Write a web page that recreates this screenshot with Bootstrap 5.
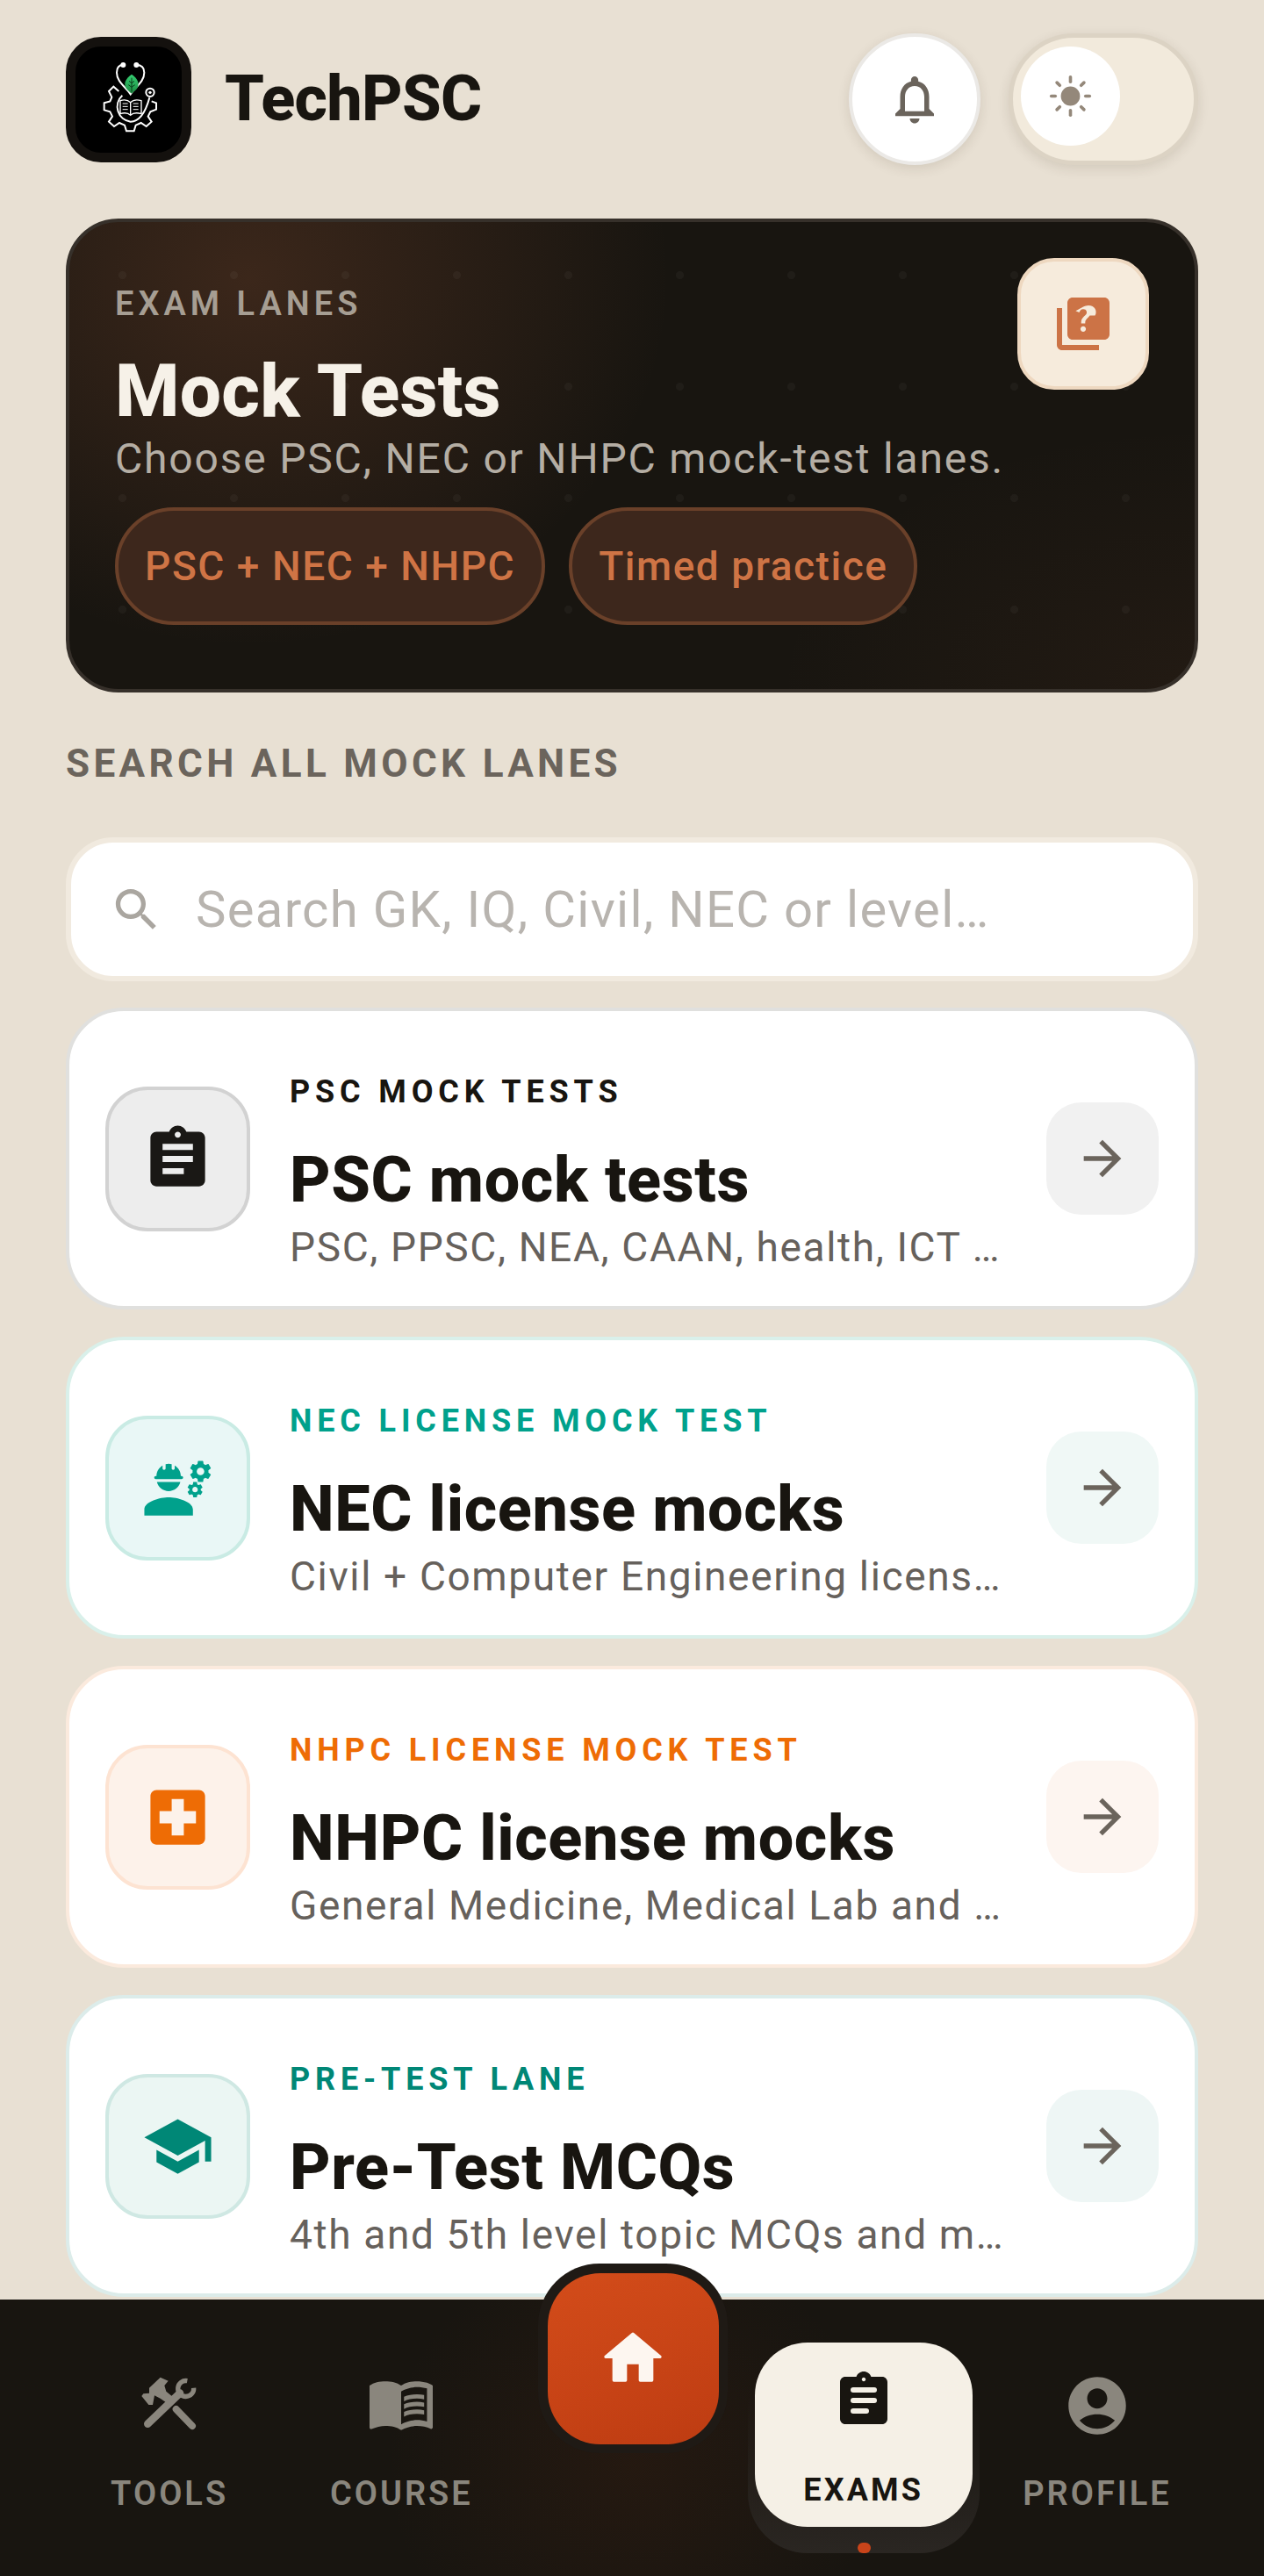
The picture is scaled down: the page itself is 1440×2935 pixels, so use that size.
<!DOCTYPE html>
<html lang="en">
<head>
  <meta charset="UTF-8" />
  <meta name="viewport" content="width=device-width, initial-scale=1" />
  <title>TechPSC - Mock Tests</title>
  <link href="https://cdn.jsdelivr.net/npm/bootstrap@5.3.0/dist/css/bootstrap.min.css" rel="stylesheet" />
  <style>
    body {
      background: #e8e0d3;
      font-family: Roboto, "Liberation Sans", sans-serif;
      color: #181510;
    }
    .page-wrap { height: 2935px; overflow: hidden; }
    .page-main { height: 2620px; padding: 38px 75px 0; }

    .top-bar { height: 150px; margin-bottom: 61px; }
    .logo-box {
      width: 143px; height: 143px; border-radius: 40px;
      background: #000; border: 11px solid #14110e;
    }
    .brand-name { font-size: 72px; font-weight: 800; letter-spacing: -.7px; margin-left: 38px; line-height: 1; }
    .bell-btn {
      width: 150px; height: 150px; border-radius: 50%;
      background: #fff; border: 4px solid #ebe9e6;
      box-shadow: 0 4px 14px rgba(60, 45, 25, .12);
    }
    .theme-toggle {
      width: 216px; height: 150px; border-radius: 75px; margin-left: 32px; padding: 10px 9px;
      background: #f2eadc; border: 5px solid #dcd3c4;
      box-shadow: 0 4px 14px rgba(60, 45, 25, .12);
    }
    .theme-knob { width: 113px; height: 113px; border-radius: 50%; background: #fff; }

    .hero-card {
      height: 540px; border-radius: 60px; padding: 72px 52px 0;
      border: 4px solid #36302a;
      background-color: #181510;
      background-image:
        radial-gradient(circle, rgba(255, 255, 255, .035) 4px, transparent 5px),
        radial-gradient(480px 420px at 16% 12%, rgba(201, 111, 69, .2), transparent 100%),
        radial-gradient(480px 300px at 100% 100%, rgba(201, 111, 69, .06), transparent 100%);
      background-size: 127px 127px, auto, auto;
      background-position: -3px -3px, 0 0, 0 0;
    }
    .hero-eyebrow { font-size: 38px; font-weight: 600; letter-spacing: 5px; color: #a69e93; line-height: 42px; }
    .hero-title { font-size: 84px; font-weight: 800; color: #f6f1e8; line-height: 94px; margin: 32px 0 0; letter-spacing: .2px; }
    .hero-sub { font-size: 48px; color: #b5aea4; line-height: 54px; letter-spacing: 1.8px; margin: 3px 0 0; white-space: nowrap; }
    .hero-chips { margin-top: 28px; gap: 27px; }
    .hero-chip {
      height: 134px; border-radius: 67px; padding: 0 30px;
      font-size: 46px; font-weight: 500; letter-spacing: 1.55px; color: #cf7445;
      background: #3d271c; border: 4px solid #6a4029;
    }
    .hero-quiz {
      width: 150px; height: 150px; border-radius: 42px; top: 41px; right: 52px;
      background: #f6ebdc; border: 4px solid #eed8c0;
    }

    .section-label { font-size: 44px; font-weight: 700; letter-spacing: 4.35px; color: #6b645c; line-height: 48px; margin: 57px 0 60px; }

    .search-field {
      height: 164px; border-radius: 54px; padding: 0 43px;
      background: #fff; border: 6px solid #f1eadf;
    }
    .search-text { font-size: 58px; color: #b8b4af; letter-spacing: 1.3px; margin-left: 36px; white-space: nowrap; }

    .lane-list { margin-top: 30px; gap: 31px; }
    .lane-card {
      height: 344px; border-radius: 66px; padding: 0 41px;
      background: #fff; border: 4px solid #e0e0de; gap: 45px;
    }
    .lane-icon { width: 165px; height: 165px; border-radius: 48px; border: 4px solid; flex: none; }
    .lane-body { flex: 1; min-width: 0; padding-top: 31px; }
    .lane-kicker { font-size: 36px; font-weight: 700; letter-spacing: 5.85px; line-height: 42px; margin-bottom: 40px; white-space: nowrap; }
    .lane-title { font-size: 72px; font-weight: 800; line-height: 80px; letter-spacing: .6px; color: #181510; margin: 0; white-space: nowrap; }
    .lane-desc { font-size: 46px; color: #66615c; line-height: 56px; letter-spacing: 1.65px; white-space: nowrap; margin-top: 8px; }
    .lane-go { width: 128px; height: 128px; border-radius: 40px; flex: none; }

    .tone-psc { border-color: #e0e0de; }
    .tone-psc .lane-kicker { color: #181510; }
    .tone-psc .lane-icon { background: #ededed; border-color: #d2d2d2; }
    .tone-psc .lane-go { background: #f1f1f1; }
    .tone-nec { border-color: #d9f0ea; }
    .tone-nec .lane-kicker { color: #00a18c; }
    .tone-nec .lane-icon { background: #e9f7f6; border-color: #c9ebe4; }
    .tone-nec .lane-go { background: #f0f8f6; }
    .tone-nhpc { border-color: #fbeadd; }
    .tone-nhpc .lane-kicker { color: #ee6c05; }
    .tone-nhpc .lane-icon { background: #fdf2ea; border-color: #fde3d2; }
    .tone-nhpc .lane-go { background: #fdf5f0; }
    .tone-pre { border-color: #dcecea; }
    .tone-pre .lane-kicker { color: #008776; }
    .tone-pre .lane-icon { background: #ebf6f3; border-color: #cfe8e3; }
    .tone-pre .lane-go { background: #eef6f5; }

    .bottom-nav {
      height: 315px; padding: 0 58px 0 61px;
      background: #181510;
      background-image: radial-gradient(280px 260px at 50% 60%, rgba(120, 50, 20, .13), transparent 100%);
    }
    .nav-slot { flex: 1 1 0; padding-top: 85px; }
    .nav-slot svg { display: block; }
    .nav-caption { font-size: 38px; font-weight: 600; letter-spacing: 3px; color: #8a867d; line-height: 42px; margin-top: 43px; }
    .home-ring {
      width: 216px; height: 216px; border-radius: 70px; top: -41px; left: 50%; margin-left: -107px;
      background: #1f1a15;
    }
    .home-btn {
      width: 195px; height: 195px; border-radius: 60px;
      background: linear-gradient(160deg, #d34c1a, #be3c12);
    }
    .exam-shell {
      width: 264px; height: 240px; border-radius: 68px; top: 49px; left: 50%; margin-left: -134px;
      background: linear-gradient(180deg, transparent 25%, #2a2622);
    }
    .exam-tile {
      width: 248px; height: 210px; border-radius: 60px; margin: 0 8px; padding-top: 30px;
      background: #f5f0e6;
    }
    .exam-caption { font-size: 36px; font-weight: 700; letter-spacing: 3.2px; color: #181510; line-height: 40px; margin-top: 46px; }
    .exam-dot { width: 15px; height: 12px; border-radius: 6px; background: #c9441a; bottom: 0; left: 50%; margin-left: -7px; }
  </style>
</head>
<body>
  <div class="page-wrap">
    <div class="page-main">

      <!-- top bar -->
      <div class="top-bar d-flex align-items-center">
        <div class="logo-box d-flex align-items-center justify-content-center flex-shrink-0">
          <svg width="90" height="90" viewBox="0 0 270 270" fill="none" stroke="#fff" stroke-width="6">
            <defs>
              <linearGradient id="leafFill" x1="0" y1="0" x2="0" y2="1">
                <stop offset="0" stop-color="#35cf72" />
                <stop offset="1" stop-color="#1d8a41" />
              </linearGradient>
            </defs>
            <path d="M115 18C100 18 93 28 93 44c0 32 30 48 47 74 17-26 47-42 47-74 0-16-7-26-27-26" />
            <circle cx="115" cy="18" r="6" fill="#fff" />
            <circle cx="160" cy="18" r="6" fill="#fff" />
            <path d="M144 50c20 14 28 30 20 46-4 8-12 12-20 20-8-8-16-12-20-20-8-16 0-32 20-46z" fill="url(#leafFill)" stroke="none" />
            <path d="M144 62v48M144 80l-9-7M144 80l9-7M144 94l-11-8M144 94l11-8" stroke="#0b3a1b" stroke-width="3" />
            <path d="M100 108L82 92 66 108l10 20-6 14-20 6v24l20 6 8 16-12 18 18 16 18-12 18 8 6 20h26l6-20 18-8 18 12 18-16-12-18 8-16 20-8v-22l-16-6" />
            <path d="M112 122a52 52 0 0 0 28 90c30 0 50-27 65-82" />
            <circle cx="207" cy="112" r="14" />
            <circle cx="207" cy="112" r="5" fill="#fff" stroke="none" />
            <path d="M105 140c15-5 27-2 35 6 8-8 20-11 37-6v45c-17-5-29-3-37 5-8-8-20-10-35-5zM140 146v44" stroke-width="4" fill="#000" />
            <path d="M113 150h18M113 160h18M113 170h18M149 150h18M149 160h18M149 170h18" stroke-width="3" />
          </svg>
        </div>
        <span class="brand-name">TechPSC</span>
        <div class="ms-auto d-flex align-items-center">
          <div class="bell-btn d-flex align-items-center justify-content-center">
            <svg width="66" height="66" viewBox="0 0 24 24" fill="#6b645c"><path d="M12 22c1.1 0 2-.9 2-2h-4c0 1.1.9 2 2 2zm6-6v-5c0-3.07-1.63-5.64-4.5-6.32V4c0-.83-.67-1.5-1.5-1.5s-1.5.67-1.5 1.5v.68C7.64 5.36 6 7.92 6 11v5l-2 2v1h16v-1l-2-2zm-2 1H8v-6c0-2.48 1.51-4.5 4-4.5s4 2.02 4 4.5v6z"/></svg>
          </div>
          <div class="theme-toggle">
            <div class="theme-knob d-flex align-items-center justify-content-center">
              <svg width="49" height="49" viewBox="0 0 54 54" fill="#94887a">
                <circle cx="27" cy="27" r="12" />
                <rect x="25" y="1" width="4" height="10" rx="2" />
                <rect x="25" y="43" width="4" height="10" rx="2" />
                <rect x="1" y="25" width="9" height="4" rx="2" />
                <rect x="44" y="25" width="9" height="4" rx="2" />
                <rect x="25" y="1" width="4" height="9" rx="2" transform="rotate(45 27 27)" />
                <rect x="25" y="1" width="4" height="9" rx="2" transform="rotate(135 27 27)" />
                <rect x="25" y="1" width="4" height="9" rx="2" transform="rotate(225 27 27)" />
                <rect x="25" y="1" width="4" height="9" rx="2" transform="rotate(315 27 27)" />
              </svg>
            </div>
          </div>
        </div>
      </div>

      <!-- hero -->
      <div class="hero-card position-relative">
        <div class="hero-eyebrow">EXAM LANES</div>
        <h1 class="hero-title">Mock Tests</h1>
        <p class="hero-sub">Choose PSC, NEC or NHPC mock-test lanes.</p>
        <div class="hero-chips d-flex">
          <div class="hero-chip d-flex align-items-center">PSC + NEC + NHPC</div>
          <div class="hero-chip d-flex align-items-center">Timed practice</div>
        </div>
        <div class="hero-quiz position-absolute d-flex align-items-center justify-content-center">
          <svg width="72" height="72" viewBox="0 0 24 24" fill="#cc7346"><path d="M4 6H2v14c0 1.1.9 2 2 2h14v-2H4V6zm16-4H8c-1.1 0-2 .9-2 2v12c0 1.1.9 2 2 2h12c1.1 0 2-.9 2-2V4c0-1.1-.9-2-2-2zm-7.99 13c-.59 0-1.05-.47-1.05-1.05 0-.59.47-1.04 1.05-1.04.59 0 1.04.45 1.04 1.04 0 .58-.45 1.05-1.04 1.05zm2.5-6.17c-.63.93-1.23 1.21-1.56 1.81-.13.24-.18.4-.18 1.18h-1.52c0-.41-.06-1.08.27-1.65.41-.73 1.18-1.16 1.63-1.8.48-.68.21-1.94-1.14-1.94-.88 0-1.32.67-1.5 1.23l-1.37-.57C11.51 5.96 12.52 5 13.99 5c1.23 0 2.08.56 2.51 1.26.37.61.58 1.73.01 2.57z"/></svg>
        </div>
      </div>

      <div class="section-label">SEARCH ALL MOCK LANES</div>

      <div class="search-field d-flex align-items-center">
        <svg width="63" height="63" viewBox="0 0 24 24" fill="#aaa6a0" class="flex-shrink-0"><path d="M15.5 14h-.79l-.28-.27C15.41 12.59 16 11.11 16 9.5 16 5.91 13.09 3 9.5 3S3 5.91 3 9.5 5.91 16 9.5 16c1.61 0 3.09-.59 4.23-1.57l.27.28v.79l5 4.99L20.49 19l-4.99-5zm-6 0C7.01 14 5 11.99 5 9.5S7.01 5 9.5 5 14 7.01 14 9.5 11.99 14 9.5 14z"/></svg>
        <span class="search-text">Search GK, IQ, Civil, NEC or level…</span>
      </div>

      <!-- lanes -->
      <div class="lane-list d-flex flex-column">
        <div class="lane-card tone-psc d-flex align-items-center">
          <div class="lane-icon d-flex align-items-center justify-content-center">
            <svg width="83" height="83" viewBox="0 0 24 24" fill="#1a1815"><path d="M19 3h-4.18C14.4 1.84 13.3 1 12 1c-1.3 0-2.4.84-2.82 2H5c-1.1 0-2 .9-2 2v14c0 1.1.9 2 2 2h14c1.1 0 2-.9 2-2V5c0-1.1-.9-2-2-2zm-7 0c.55 0 1 .45 1 1s-.45 1-1 1-1-.45-1-1 .45-1 1-1zm2 14H7v-2h7v2zm3-4H7v-2h10v2zm0-4H7V7h10v2z"/></svg>
          </div>
          <div class="lane-body">
            <div class="lane-kicker">PSC MOCK TESTS</div>
            <h2 class="lane-title">PSC mock tests</h2>
            <div class="lane-desc">PSC, PPSC, NEA, CAAN, health, ICT …</div>
          </div>
          <div class="lane-go d-flex align-items-center justify-content-center">
            <svg width="64" height="64" viewBox="0 0 24 24" fill="#6b645c"><path d="M12 4l-1.41 1.41L16.17 11H4v2h12.17l-5.58 5.59L12 20l8-8z"/></svg>
          </div>
        </div>

        <div class="lane-card tone-nec d-flex align-items-center">
          <div class="lane-icon d-flex align-items-center justify-content-center">
            <svg width="83" height="83" viewBox="0 0 24 24" fill="#00a18c">
              <path d="M9 15c-2.67 0-8 1.34-8 4v2h16v-2c0-2.66-5.33-4-8-4zM4.74 9h8.53c.27 0 .49-.22.49-.49v-.02c0-.27-.22-.49-.49-.49H13c0-1.48-.81-2.75-2-3.45v.95c0 .28-.22.5-.5.5s-.5-.22-.5-.5V4.14C9.68 4.06 9.35 4 9 4s-.68.06-1 .14V5.5c0 .28-.22.5-.5.5S7 5.78 7 5.5v-.95C5.81 5.25 5 6.52 5 8h-.26c-.27 0-.49.22-.49.49v.03c0 .26.22.48.49.48zM9 13c1.86 0 3.41-1.28 3.86-3H5.14c.45 1.72 2 3 3.86 3z"/>
              <path d="M22.1 6.84c.01-.11.02-.22.02-.34 0-.12-.01-.23-.03-.34l.74-.58c.07-.05.08-.15.04-.22l-.7-1.21c-.04-.08-.14-.1-.21-.08l-.86.35c-.18-.14-.38-.25-.59-.34l-.13-.93c-.02-.09-.09-.15-.18-.15h-1.4c-.09 0-.16.06-.17.15l-.13.93c-.21.09-.41.21-.59.34l-.87-.35c-.08-.03-.17 0-.21.08l-.7 1.21c-.04.08-.03.17.04.22l.74.58c-.02.11-.03.23-.03.34 0 .11.01.23.03.34l-.74.58c-.07.05-.08.15-.04.22l.7 1.21c.04.08.14.1.21.08l.87-.35c.18.14.38.25.59.34l.13.93c.01.09.08.15.17.15h1.4c.09 0 .16-.06.17-.15l.13-.93c.21-.09.41-.21.59-.34l.86.35c.08.03.17 0 .21-.08l.7-1.21c.04-.08.03-.17-.04-.22l-.73-.58zm-2.6.91c-.69 0-1.25-.56-1.25-1.25s.56-1.25 1.25-1.25 1.25.56 1.25 1.25-.56 1.25-1.25 1.25z"/>
              <path transform="translate(17.7 12.5) scale(.72) translate(-19.5 -6.5)" d="M22.1 6.84c.01-.11.02-.22.02-.34 0-.12-.01-.23-.03-.34l.74-.58c.07-.05.08-.15.04-.22l-.7-1.21c-.04-.08-.14-.1-.21-.08l-.86.35c-.18-.14-.38-.25-.59-.34l-.13-.93c-.02-.09-.09-.15-.18-.15h-1.4c-.09 0-.16.06-.17.15l-.13.93c-.21.09-.41.21-.59.34l-.87-.35c-.08-.03-.17 0-.21.08l-.7 1.21c-.04.08-.03.17.04.22l.74.58c-.02.11-.03.23-.03.34 0 .11.01.23.03.34l-.74.58c-.07.05-.08.15-.04.22l.7 1.21c.04.08.14.1.21.08l.87-.35c.18.14.38.25.59.34l.13.93c.01.09.08.15.17.15h1.4c.09 0 .16-.06.17-.15l.13-.93c.21-.09.41-.21.59-.34l.86.35c.08.03.17 0 .21-.08l.7-1.21c.04-.08.03-.17-.04-.22l-.73-.58zm-2.6.91c-.69 0-1.25-.56-1.25-1.25s.56-1.25 1.25-1.25 1.25.56 1.25 1.25-.56 1.25-1.25 1.25z"/>
            </svg>
          </div>
          <div class="lane-body">
            <div class="lane-kicker">NEC LICENSE MOCK TEST</div>
            <h2 class="lane-title">NEC license mocks</h2>
            <div class="lane-desc">Civil + Computer Engineering licens…</div>
          </div>
          <div class="lane-go d-flex align-items-center justify-content-center">
            <svg width="64" height="64" viewBox="0 0 24 24" fill="#6b645c"><path d="M12 4l-1.41 1.41L16.17 11H4v2h12.17l-5.58 5.59L12 20l8-8z"/></svg>
          </div>
        </div>

        <div class="lane-card tone-nhpc d-flex align-items-center">
          <div class="lane-icon d-flex align-items-center justify-content-center">
            <svg width="83" height="83" viewBox="0 0 24 24" fill="#ee6c05"><path d="M19 3H5c-1.1 0-1.99.9-1.99 2L3 19c0 1.1.9 2 2 2h14c1.1 0 2-.9 2-2V5c0-1.1-.9-2-2-2zm-1 11h-4v4h-4v-4H6v-4h4V6h4v4h4v4z"/></svg>
          </div>
          <div class="lane-body">
            <div class="lane-kicker">NHPC LICENSE MOCK TEST</div>
            <h2 class="lane-title">NHPC license mocks</h2>
            <div class="lane-desc">General Medicine, Medical Lab and …</div>
          </div>
          <div class="lane-go d-flex align-items-center justify-content-center">
            <svg width="64" height="64" viewBox="0 0 24 24" fill="#6b645c"><path d="M12 4l-1.41 1.41L16.17 11H4v2h12.17l-5.58 5.59L12 20l8-8z"/></svg>
          </div>
        </div>

        <div class="lane-card tone-pre d-flex align-items-center">
          <div class="lane-icon d-flex align-items-center justify-content-center">
            <svg width="83" height="83" viewBox="0 0 24 24" fill="#008776"><path d="M5 13.18v4L12 21l7-3.82v-4L12 17l-7-3.82zM12 3L1 9l11 6 9-4.91V17h2V9L12 3z"/></svg>
          </div>
          <div class="lane-body">
            <div class="lane-kicker">PRE-TEST LANE</div>
            <h2 class="lane-title">Pre-Test MCQs</h2>
            <div class="lane-desc">4th and 5th level topic MCQs and m…</div>
          </div>
          <div class="lane-go d-flex align-items-center justify-content-center">
            <svg width="64" height="64" viewBox="0 0 24 24" fill="#6b645c"><path d="M12 4l-1.41 1.41L16.17 11H4v2h12.17l-5.58 5.59L12 20l8-8z"/></svg>
          </div>
        </div>
      </div>
    </div>

    <!-- bottom nav -->
    <nav class="bottom-nav d-flex position-relative">
      <div class="nav-slot d-flex flex-column align-items-center">
        <svg width="72" height="72" viewBox="21 45 216 216" fill="none" stroke="#8a867d">
          <path d="M60 92L98 56l27 12-13 16 6 20 22 18-18 23-24-17-20-10-6 32H58L34 120l6-8 20-2z" fill="#8a867d" stroke="none" />
          <path d="M152 165l55 57" stroke-width="24" stroke-linecap="round" />
          <path d="M55 215L165 110" stroke-width="26" stroke-linecap="round" />
          <path d="M190 68a27 27 0 1 0 22 24" stroke-width="16" />
        </svg>
        <div class="nav-caption">TOOLS</div>
      </div>
      <div class="nav-slot d-flex flex-column align-items-center">
        <svg width="72" height="72" viewBox="1 3 22 20" fill="#8a867d"><path d="M21 5c-1.11-.35-2.33-.5-3.5-.5-1.95 0-4.05.4-5.5 1.5-1.45-1.1-3.55-1.5-5.5-1.5S2.45 4.9 1 6v14.65c0 .25.25.5.5.5.1 0 .15-.05.25-.05C3.1 20.45 5.05 20 6.5 20c1.95 0 4.05.4 5.5 1.5 1.35-.85 3.800-1.500 5.5-1.500 1.650 0 3.350.3 4.750 1.050.1.05.15.05.25.05.25 0 .5-.25.5-.5V6c-.6-.45-1.250-.75-2-1zm0 13.500c-1.100-.35-2.300-.5-3.500-.5-1.700 0-4.150.65-5.500 1.500V8c1.350-.85 3.800-1.500 5.500-1.500 1.200 0 2.400.15 3.500.5v11.500z"/><path d="M17.500 10.500c.88 0 1.730.09 2.500.26V9.240c-.79-.15-1.640-.24-2.500-.24-1.700 0-3.240.29-4.500.83v1.660c1.130-.64 2.700-.99 4.500-.99zM13 12.490v1.660c1.130-.64 2.700-.99 4.500-.99.88 0 1.730.09 2.500.26V11.900c-.79-.15-1.640-.24-2.500-.24-1.700 0-3.240.3-4.500.83zM17.500 14.330c-1.700 0-3.240.29-4.500.83v1.660c1.130-.64 2.700-.99 4.500-.99.88 0 1.730.09 2.500.26v-1.520c-.79-.16-1.640-.24-2.500-.24z"/></svg>
        <div class="nav-caption">COURSE</div>
      </div>
      <div class="nav-slot"></div>
      <div class="nav-slot position-relative">
        <div class="exam-shell position-absolute">
          <div class="exam-tile d-flex flex-column align-items-center">
            <svg width="72" height="72" viewBox="0 0 24 24" fill="#181510"><path d="M19 3h-4.180C14.400 1.840 13.300 1 12 1c-1.300 0-2.400.84-2.820 2H5c-1.100 0-2 .9-2 2v14c0 1.100.9 2 2 2h14c1.100 0 2-.9 2-2V5c0-1.100-.9-2-2-2zm-7 .25c.41 0 .75.34.75.75s-.34.75-.75.75-.75-.34-.75-.75.34-.75.75-.75zM8 7h8a1 1 0 0 1 0 2H8a1 1 0 0 1 0-2zm0 4h8a1 1 0 0 1 0 2H8a1 1 0 0 1 0-2zm0 4h5a1 1 0 0 1 0 2H8a1 1 0 0 1 0-2z"/></svg>
            <div class="exam-caption">EXAMS</div>
          </div>
          <div class="exam-dot position-absolute"></div>
        </div>
      </div>
      <div class="nav-slot d-flex flex-column align-items-center">
        <svg width="72" height="72" viewBox="1 1 22 22" fill="#8a867d"><path d="M12 2C6.480 2 2 6.480 2 12s4.480 10 10 10 10-4.480 10-10S17.520 2 12 2zm0 4c1.930 0 3.500 1.570 3.500 3.500S13.930 13 12 13s-3.500-1.570-3.500-3.500S10.070 6 12 6zm0 14c-2.030 0-4.430-.82-6.140-2.880C7.550 15.800 9.680 15 12 15s4.450.8 6.140 2.120C16.430 19.180 14.030 20 12 20z"/></svg>
        <div class="nav-caption">PROFILE</div>
      </div>
      <div class="home-ring position-absolute d-flex align-items-center justify-content-center">
        <div class="home-btn d-flex align-items-center justify-content-center">
          <svg width="80" height="80" viewBox="0 0 24 24" fill="#fdf6f0"><path d="M10 19.500v-5.500h4v5.500a.5.5 0 0 0 .5.5h4a.5.5 0 0 0 .5-.5V12h2.300a.5.5 0 0 0 .33-.87L12.340 3.300a.5.5 0 0 0-.68 0L2.370 11.130a.5.5 0 0 0 .33.87H5v7.500a.5.5 0 0 0 .5.5h4a.5.5 0 0 0 .5-.5z"/></svg>
        </div>
      </div>
    </nav>
  </div>

  <script src="https://cdn.jsdelivr.net/npm/bootstrap@5.3.0/dist/js/bootstrap.bundle.min.js"></script>
</body>
</html>
